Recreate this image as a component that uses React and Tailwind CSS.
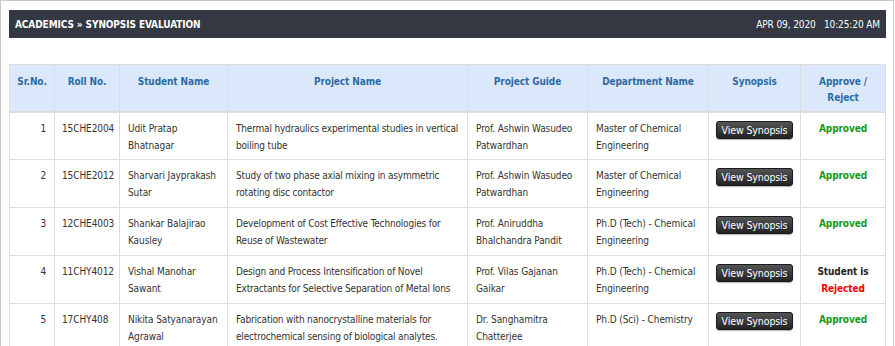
import React from "react";

const rows = [
  { sr: 1, roll: "15CHE2004", name: "Udit Pratap Bhatnagar", project: "Thermal hydraulics experimental studies in vertical boiling tube", guide: "Prof. Ashwin Wasudeo Patwardhan", dept: "Master of Chemical Engineering", status: "approved" },
  { sr: 2, roll: "15CHE2012", name: "Sharvari Jayprakash Sutar", project: "Study of two phase axial mixing in asymmetric rotating disc contactor", guide: "Prof. Ashwin Wasudeo Patwardhan", dept: "Master of Chemical Engineering", status: "approved" },
  { sr: 3, roll: "12CHE4003", name: "Shankar Balajirao Kausley", project: "Development of Cost Effective Technologies for Reuse of Wastewater", guide: "Prof. Aniruddha Bhalchandra Pandit", dept: "Ph.D (Tech) - Chemical Engineering", status: "approved" },
  { sr: 4, roll: "11CHY4012", name: "Vishal Manohar Sawant", project: "Design and Process Intensification of Novel Extractants for Selective Separation of Metal Ions", guide: "Prof. Vilas Gajanan Gaikar", dept: "Ph.D (Tech) - Chemical Engineering", status: "rejected" },
  { sr: 5, roll: "17CHY408", name: "Nikita Satyanarayan Agrawal", project: "Fabrication with nanocrystalline materials for electrochemical sensing of biological analytes.", guide: "Dr. Sanghamitra Chatterjee", dept: "Ph.D (Sci) - Chemistry", status: "approved" },
];

const heads = [
  ["Sr.No.", "w-[45px]"],
  ["Roll No.", "w-[65px]"],
  ["Student Name", "w-[108px]"],
  ["Project Name", "w-[240px]"],
  ["Project Guide", "w-[120px]"],
  ["Department Name", "w-[121px]"],
  ["Synopsis", "w-[92px]"],
  ["Approve / Reject", "w-[85px]"],
];

const td = "border border-[#dddddd] pt-[7px] pb-[5px] align-top leading-[17px]";

export default function App() {
  return (
    <div
      className="h-[346px] w-[894px] overflow-hidden border-l border-t border-r border-[#c9c9c9] bg-white pl-2 pr-[7px] pt-[9px] text-[10px] tracking-[-0.1px] text-[#333]"
      style={{ fontFamily: '"DejaVu Sans Condensed", Tahoma, "DejaVu Sans", sans-serif' }}
    >
      <div className="flex h-[28px] items-center justify-between bg-[#333842] pl-[6px] pr-[6px] text-white">
        <span className="font-bold">ACADEMICS » SYNOPSIS EVALUATION</span>
        <span>APR 09, 2020&nbsp;&nbsp;&nbsp;10:25:20 AM</span>
      </div>
      <table className="mt-[26px] w-[876px] table-fixed border-collapse border border-[#dddddd] leading-[16px]">
        <thead>
          <tr className="h-[47px] bg-[#dbe8fb]">
            {heads.map(([h, w]) => (
              <th
                key={h}
                className={`${w} border border-b-2 border-[#dddddd] px-[6px] pt-[9px] pb-[4px] text-center align-top font-bold text-[#2c6ca3]`}
              >
                {h === "Approve / Reject" ? (
                  <>
                    Approve /<br />
                    Reject
                  </>
                ) : (
                  h
                )}
              </th>
            ))}
          </tr>
        </thead>
        <tbody>
          {rows.map((r) => (
            <tr key={r.sr} className="h-[48px]">
              <td className={`${td} px-[8px] text-right`}>{r.sr}</td>
              <td className={`${td} px-[7px]`}>{r.roll}</td>
              <td className={`${td} px-[8px]`}>{r.name}</td>
              <td className={`${td} px-[8px] tracking-[-0.18px]`}>{r.project}</td>
              <td className={`${td} px-[8px]`}>{r.guide}</td>
              <td className={`${td} px-[8px]`}>{r.dept}</td>
              <td className="border border-[#dddddd] px-[7px] pt-[8px] pb-[5px] text-center align-top">
                <button className="h-[18px] w-[77px] rounded-[3px] border border-[#1a1a1a] bg-gradient-to-b from-[#555555] to-[#232323] text-[10.5px] leading-[16px] tracking-[-0.1px] text-white shadow-[0_1px_1px_rgba(0,0,0,0.3)]">
                  View Synopsis
                </button>
              </td>
              <td className={`${td} px-[6px] text-center font-bold`}>
                {r.status === "approved" ? (
                  <span className="text-[#169a16]">Approved</span>
                ) : (
                  <>
                    <span className="text-[#222]">Student is</span>
                    <br />
                    <span className="text-[#ff0000]">Rejected</span>
                  </>
                )}
              </td>
            </tr>
          ))}
        </tbody>
      </table>
    </div>
  );
}
